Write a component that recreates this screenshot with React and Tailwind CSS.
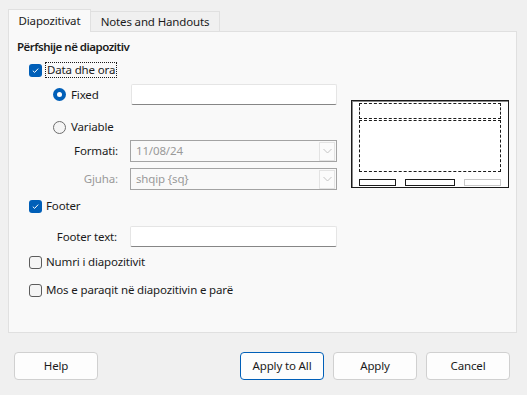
import React from "react";

const F = { fontFamily: '"Noto Sans", "Open Sans", sans-serif' };

function Check({ checked }) {
  return checked ? (
    <span className="flex h-[13px] w-[13px] shrink-0 items-center justify-center rounded-[3px] bg-[#005fb8]">
      <svg width="9" height="9" viewBox="0 0 9 9">
        <path d="M1.8 4.7 L3.6 6.4 L7.2 2.6" fill="none" stroke="#ffffff" strokeWidth="1" />
      </svg>
    </span>
  ) : (
    <span className="block h-[13px] w-[13px] shrink-0 rounded-[3px] border border-[#5c5c5c] bg-[#f5f5f5]" />
  );
}

function Radio({ checked }) {
  return checked ? (
    <span className="flex h-[13px] w-[13px] shrink-0 items-center justify-center rounded-full bg-[#005fb8]">
      <span className="block h-[5px] w-[5px] rounded-full bg-white" />
    </span>
  ) : (
    <span className="block h-[13px] w-[13px] shrink-0 rounded-full border border-[#6e6e6e] bg-[#f5f5f5]" />
  );
}

function Select({ value }) {
  return (
    <div className="flex h-[22px] w-[207px] items-center border border-[#a3a3a3] bg-[#f9f9f9]">
      <span className="flex-1 pl-[5px] text-[#9a9a9a]">{value}</span>
      <span className="mr-[1px] flex h-[19px] w-[16px] items-center justify-center border border-[#e3e3e3] bg-[#fbfbfb]">
        <svg width="9" height="6" viewBox="0 0 9 6">
          <path d="M0.5 1 L4.5 5 L8.5 1" fill="none" stroke="#c4c4c4" strokeWidth="1" />
        </svg>
      </span>
    </div>
  );
}

function TextInput() {
  return (
    <div className="h-[21px] w-[207px] rounded-[2px] border border-[#e5e5e5] border-b-[#868686] bg-white" />
  );
}

function Btn({ children, primary }) {
  return (
    <button
      className={
        "flex h-[28px] w-[84px] items-center justify-center rounded-[4px] border bg-[#fdfdfd] text-[#1b1b1b] " +
        (primary ? "border-[#005fb8]" : "border-[#d0d0d0]")
      }
    >
      {children}
    </button>
  );
}

export default function App() {
  return (
    <div className="h-[395px] w-[527px] bg-[#f0f0f0] text-[11.5px] tracking-[-0.15px] text-[#1b1b1b]" style={F}>
      <div className="px-[8px] pt-[9px]">
        {/* tabs */}
        <div className="relative z-10 flex h-[23px] items-end">
          <div className="flex h-[23px] w-[83px] items-center justify-center border border-b-0 border-[#e0e0e0] bg-[#f9f9f9]">
            Diapozitivat
          </div>
          <div className="mb-[1px] flex h-[20px] w-[129px] items-center justify-center border border-l-0 border-b-0 border-[#e0e0e0] bg-[#f0f0f0]">
            Notes and Handouts
          </div>
        </div>
        {/* panel */}
        <div className="-mt-[1px] flex h-[302px] w-[509px] border border-[#e0e0e0] bg-[#f9f9f9] pl-[7px]">
          <div className="flex w-[321px] flex-col">
            <div className="mt-[7px] flex h-[16px] items-center pl-[1px] font-semibold tracking-[-0.5px]">Përfshije në diapozitiv</div>
            <div className="mt-[7px] flex h-[16px] items-center pl-[13px]">
              <Check checked />
              <span className="ml-[3px] border border-dotted border-[#1b1b1b] px-[1px] leading-[14px]">Data dhe ora</span>
            </div>
            <div className="mt-[6px] flex h-[21px] items-center">
              <div className="flex w-[115px] items-center pl-[37px]">
                <Radio checked />
                <span className="ml-[5px]">Fixed</span>
              </div>
              <TextInput />
            </div>
            <div className="mt-[12px] flex h-[20px] items-center pl-[37px]">
              <Radio />
              <span className="ml-[5px]">Variable</span>
            </div>
            <div className="mt-[3px] flex h-[22px] items-center">
              <span className="w-[102px] text-right">Formati:</span>
              <span className="ml-[12px]"><Select value="11/08/24" /></span>
            </div>
            <div className="mt-[6px] flex h-[22px] items-center">
              <span className="w-[102px] text-right text-[#9a9a9a]">Gjuha:</span>
              <span className="ml-[12px]"><Select value="shqip {sq}" /></span>
            </div>
            <div className="mt-[8px] flex h-[16px] items-center pl-[13px]">
              <Check checked />
              <span className="ml-[4px]">Footer</span>
            </div>
            <div className="mt-[12px] flex h-[21px] items-center">
              <span className="w-[102px] text-right">Footer text:</span>
              <span className="ml-[13px]"><TextInput /></span>
            </div>
            <div className="mt-[7px] flex h-[16px] items-center pl-[13px]">
              <Check />
              <span className="ml-[4px]">Numri i diapozitivit</span>
            </div>
            <div className="mt-[12px] flex h-[16px] items-center pl-[13px]">
              <Check />
              <span className="ml-[4px]">Mos e paraqit në diapozitivin e parë</span>
            </div>
          </div>
          {/* preview */}
          <div className="ml-[14px] pt-[68px]">
            <div className="flex h-[88px] w-[158px] flex-col border border-[#1b1b1b] bg-white px-[7px] pt-[2px] shadow-[inset_1px_1px_0_#8a8a8a]">
              <div className="h-[16px] border border-dashed border-[#1b1b1b]" />
              <div className="mt-[1px] h-[52px] border border-dashed border-[#1b1b1b]" />
              <div className="mt-[7px] flex h-[7px] justify-between">
                <div className="w-[37px] border border-[#1b1b1b]" />
                <div className="w-[50px] border border-[#1b1b1b]" />
                <div className="w-[37px] border border-[#c8c8c8]" />
              </div>
            </div>
          </div>
        </div>
        {/* buttons */}
        <div className="mt-[19px] flex items-center pl-[6px]">
          <Btn>Help</Btn>
          <div className="ml-[142px] flex gap-[9px]">
            <Btn primary>Apply to All</Btn>
            <Btn>Apply</Btn>
            <Btn>Cancel</Btn>
          </div>
        </div>
      </div>
    </div>
  );
}
